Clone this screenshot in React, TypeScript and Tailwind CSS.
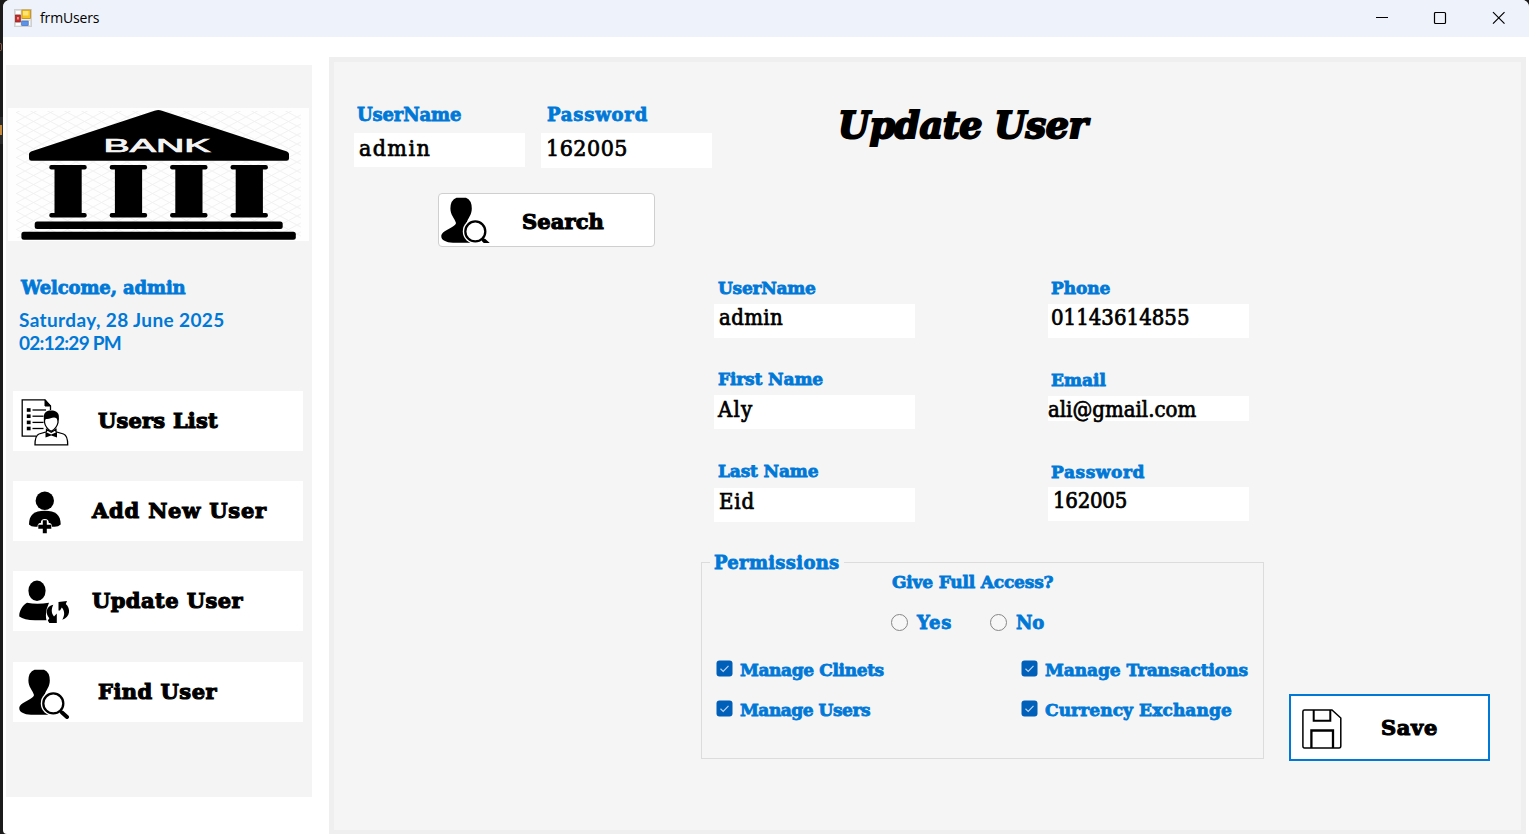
import React from "react";

const slab = "font-['DejaVu_Serif',serif] font-bold whitespace-nowrap";
const blue = "text-[#0078d7] [-webkit-text-stroke:0.8px_#0078d7]";
const black = "text-black [-webkit-text-stroke:1.1px_#000]";

function Label({ text, className = "" }: { text: string; className?: string }) {
  return <div className={`${slab} ${blue} leading-5 ${className}`}>{text}</div>;
}

function Field({ value, className = "" }: { value: string; className?: string }) {
  return (
    <div
      className={`bg-white font-['DejaVu_Serif_Condensed','DejaVu_Serif',serif] whitespace-nowrap text-black [-webkit-text-stroke:0.7px_#000] ${className}`}
    >
      {value}
    </div>
  );
}

function AppIcon() {
  return (
    <svg width="18" height="18" viewBox="0 0 18 18" className="relative -top-px">
      <rect x="0.5" y="0.5" width="17" height="17" fill="#dedede" stroke="#cfcfcf" />
      <path d="M2 2h4.500v3H2zM2 14h4.500v2.500H2zM8 11h8v-0.500H8zM14.500 12h1.500v4h-1.500z" fill="#fff" />
      <rect x="1.300" y="6" width="5.200" height="7" fill="#c22b2b" stroke="#8f1d1d" strokeWidth="0.6" />
      <rect x="3.200" y="8" width="1.500" height="2.500" fill="#f3b0a8" />
      <rect x="7.900" y="1" width="8.500" height="8.500" fill="#f6c320" stroke="#c08a10" strokeWidth="0.8" />
      <rect x="9" y="2" width="5.500" height="4.500" fill="#fde37a" />
      <rect x="7.700" y="12" width="6.500" height="4.500" fill="#5b93ea" stroke="#3465b8" strokeWidth="0.6" />
    </svg>
  );
}

function BankLogo() {
  return (
    <svg width="301" height="133" viewBox="0 0 301 133" className="block">
      <defs>
        <pattern id="lattice" width="17" height="9" patternUnits="userSpaceOnUse">
          <path d="M0 0L17 9M17 0L0 9" stroke="#efefef" strokeWidth="0.9" />
        </pattern>
      </defs>
      <rect width="301" height="133" fill="#fefefe" />
      <rect x="8" y="3" width="285" height="127" fill="url(#lattice)" />
      <path d="M150.300 2Q152 2 154 2.800L279 43.500Q281 44.500 281 46V50.500Q281 52.700 278.500 52.700H23.500Q21 52.700 21 50.500V46Q21 44.500 23 43.500L146.500 2.800Q149 2 150.300 2Z" fill="#000" />
      {[41.3, 101.7, 162.1, 222.5].map((x) => (
        <g key={x} transform={`translate(${x} 57)`}>
          <rect width="37.400" height="4.500" rx="2" />
          <rect x="5.200" y="2" width="27.200" height="49" />
          <rect y="48" width="37.400" height="4.500" rx="2" />
        </g>
      ))}
      <rect x="26.700" y="113.500" width="248" height="7.500" rx="2.500" />
      <rect x="13.400" y="123.800" width="274.400" height="8" rx="2.500" />
      <text
        x="95.500"
        y="44.300"
        textLength="107"
        lengthAdjust="spacingAndGlyphs"
        fill="#f4f4f4"
        stroke="#f4f4f4"
        strokeWidth="0.7"
        className="font-['Liberation_Sans',sans-serif] text-[18px]"
      >
        BANK
      </text>
    </svg>
  );
}

function ListIcon() {
  return (
    <svg width="50" height="50" viewBox="0 0 50 50" fill="none" stroke="#000" strokeWidth="1.300">
      <path d="M16 38.200H2.200V1.800H25L30.500 8V12" />
      <path d="M25 1.800V8H30.500Z" fill="#000" strokeWidth="1" />
      {[12, 18.2, 24.4, 30.5].map((y) => (
        <g key={y}>
          <rect x="6.800" y={y - 1.8} width="3.800" height="3.600" fill="#000" stroke="none" />
          <path d={`M12.500 ${y}H${y < 15 ? 26 : 23.5}`} />
        </g>
      ))}
      <path d="M24.500 20V24.500Q25.500 30 31.200 33.300Q37 30 38 24.500V20" fill="#fff" />
      <path d="M24.300 22.500C22.500 15 26 12.600 31 12.600C36.500 12.600 40.300 15 38.500 22.500H37.500C37.200 20.500 36 19.500 34 19.500C31 19.500 29.500 21.500 26 21C25.300 21.300 25.300 22 25 22.500Z" fill="#000" stroke="none" />
      <path d="M26.500 31.500V33.800L19 36Q15 37.500 15 46.800H47.700Q47.700 37.500 43.500 36L36 33.800V31.500L31.200 34.300Z" fill="#fff" />
      <path d="M25.500 34L31.200 36.500L37 34V39.500L31.200 37.500L25.500 39.500Z" fill="#000" stroke="none" />
    </svg>
  );
}

function AddIcon() {
  return (
    <svg width="50" height="50" viewBox="0 0 50 50" className="relative top-[2px]">
      <circle cx="24.800" cy="10.800" r="9.200" />
      <path d="M9 34.500C9 25 14 20.800 24.800 20.800S40.700 25 40.700 34.500Q38.500 36.700 34.500 36.800H15Q11 36.700 9 34.500Z" />
      <path d="M24.800 33V40M21.500 36.700H28" stroke="#fff" strokeWidth="8" strokeLinecap="round" />
      <path d="M24.800 30.200V43.200M18.300 36.700H31.300" stroke="#000" strokeWidth="4" />
    </svg>
  );
}

function UpdateIcon() {
  return (
    <svg width="52" height="50" viewBox="0 0 52 50" className="relative top-[2px] -left-px">
      <ellipse cx="18" cy="10.800" rx="8.600" ry="10.200" />
      <path d="M8 22.800Q18 24.500 30 22.800Q25.500 32 27.500 40.300H16Q5 40 0.300 36.500C-0.200 32 3.500 25 8 22.800Z" />
      <path d="M34.300 24.800C27 26 26 33.500 30.300 38.300L28.800 40.500L30.300 43H37.800V33.500L35 36.500C32 33 32.300 29 34.300 24.800Z" />
      <path d="M43.300 39.800C51.500 37 51.800 28.500 46.800 24L48 21L39.500 22V30.500H41L42.800 27.500C45.800 31 46 35 43.300 39.800Z" />
    </svg>
  );
}

function FindIcon({ clipped = false }: { clipped?: boolean }) {
  return (
    <svg width="52" height={clipped ? 46 : 50} viewBox={clipped ? "0 0 52 46" : "0 0 52 50"} className={clipped ? "relative top-px -left-px" : "relative"}>
      <path d="M15.500 0.700H25Q30.800 3 30.800 11.500C30.800 18 27 21 25.500 26Q25.500 28.500 31 30.500L29 45.800H12C5 45.500 0.300 43 0.300 39.500C0.300 33 14 31 15 26C13.500 21 9.400 18 9.400 11.500Q9.400 3 15.500 0.700Z" />
      <circle cx="34.300" cy="34.400" r="12.500" fill="#fff" />
      <circle cx="34.300" cy="34.400" r="10" fill="#fff" stroke="#000" strokeWidth="2.300" />
      <path d="M41.500 42L43 43.500" stroke="#000" strokeWidth="2.500" />
      <path d="M43 43.500L48 48" stroke="#000" strokeWidth="4" strokeLinecap="round" />
    </svg>
  );
}

function SaveIcon() {
  return (
    <svg width="40" height="40" viewBox="0 0 40 40" fill="none" stroke="#000" className="relative top-px">
      <path d="M2.500 0.900H30L38.800 9V37Q38.800 39 37 39H2.500Q0.900 39 0.900 37V2.500Q0.900 0.900 2.500 0.900Z" strokeWidth="1.500" />
      <path d="M11.700 1V11.800H28.300V1" strokeWidth="2" />
      <path d="M9.400 39V21.500H31V39" strokeWidth="2.300" />
    </svg>
  );
}

function NavButton({ icon, text, pad, className = "" }: { icon: React.ReactNode; text: string; pad: string; className?: string }) {
  return (
    <button className={`flex h-[60px] w-[290px] items-start bg-white pt-[7px] text-left ${pad}`}>
      <span className="w-[52px] shrink-0">{icon}</span>
      <span className={`${slab} ${black} pt-[1px] text-[21px] leading-[44px] ${className}`}>{text}</span>
    </button>
  );
}

function Check({ text, className = "" }: { text: string; className?: string }) {
  return (
    <label className="flex h-5 items-start">
      <svg width="17" height="17" viewBox="0 0 17 17" className="mr-[7px] shrink-0">
        <rect x="0.500" y="0.500" width="16" height="16" rx="3" fill="#005fb8" />
        <path d="M4.500 8.800L7.200 11.400L12.500 5.800" fill="none" stroke="#b9d6f0" strokeWidth="1.200" />
      </svg>
      <span className={`${slab} ${blue} relative -top-[0.5px] text-[17px] leading-5 ${className}`}>{text}</span>
    </label>
  );
}

function Radio({ text, className = "" }: { text: string; className?: string }) {
  return (
    <label className="flex h-5 items-center">
      <span className="mr-[9px] size-[17px] rounded-full border-[1.500px] border-[#868686] bg-[#f7f7f7]" />
      <span className={`${slab} ${blue} pt-[2px] text-[18px] leading-5 ${className}`}>{text}</span>
    </label>
  );
}

export default function App() {
  return (
    <div className="relative h-[834px] w-[1529px] overflow-hidden bg-[#1b1b1c] pl-[3px]">
      <div className="absolute top-[43px] left-0 h-[8px] w-[2px] rounded-r border border-l-0 border-[#8a5a4a]" />
      <div className="absolute top-[117px] left-0 h-[27px] w-[3px] bg-[#2c2c2c]" />
      <div className="absolute top-[125px] left-0 h-[10px] w-[2px] bg-[#c58a3c]" />
      <div className="flex h-full w-full flex-col overflow-hidden rounded-t-[7px] rounded-bl-[4px] bg-white">
        <header className="flex h-[37px] shrink-0 items-center bg-[#eef2fa] pl-[11px]">
          <AppIcon />
          <span className="mb-[2px] ml-[8px] font-['Open_Sans',sans-serif] text-[14px] tracking-[-0.15px] text-black">frmUsers</span>
          <svg width="131" height="14" viewBox="0 0 131 14" className="mr-[23px] mb-px ml-auto" fill="none" stroke="#000" strokeWidth="1.200">
            <path d="M1 6.500H13" />
            <rect x="59.500" y="1.500" width="11" height="11" rx="1" />
            <path d="M118 1.200L129.500 12.700M129.500 1.200L118 12.700" />
          </svg>
        </header>

        <div className="flex min-h-0 flex-1">
          <aside className="mt-[28px] ml-[3px] flex h-[732px] w-[306px] shrink-0 flex-col bg-[#f4f4f4] pt-[43px]">
            <div className="ml-[2px]">
              <BankLogo />
            </div>
            <Label text="Welcome, admin" className="mt-[37px] ml-[15px] text-[18px] tracking-[-0.12px]" />
            <div className="mt-[11px] ml-[13px] h-[45px] font-[Lato,sans-serif] text-[19px] leading-[22px] font-bold whitespace-nowrap text-[#0078d7]">
              <div className="tracking-[0.38px]">Saturday, 28 June 2025</div>
              <div className="pt-px tracking-[-0.75px]">02:12:29 PM</div>
            </div>
            <nav className="mt-[37px] ml-[7px] flex flex-col gap-[30px]">
              <NavButton icon={<ListIcon />} text="Users List" pad="pl-[7px]" className="ml-[26px] tracking-[0.2px]" />
              <NavButton icon={<AddIcon />} text="Add New User" pad="pl-[7px]" className="ml-[20px] tracking-[0.79px]" />
              <NavButton icon={<UpdateIcon />} text="Update User" pad="pl-[7px]" className="ml-[20px] tracking-[0.43px]" />
              <div className="pt-px">
                <NavButton icon={<FindIcon />} text="Find User" pad="pl-[6px]" className="ml-[27px] tracking-[0.48px]" />
              </div>
            </nav>
          </aside>

          <main className="mt-[20px] ml-[17px] flex w-[1197px] shrink-0 flex-col border-[5px] border-b-[4px] border-[#efefef] bg-[#f5f5f5]">
            <section className="flex h-[211px] pt-[42px] pl-[20px]">
              <div className="w-[358px]">
                <div className="flex">
                  <div className="w-[187px]">
                    <Label text="UserName" className="ml-[3px] pt-[1px] text-[18px] tracking-[-0.15px]" />
                    <Field value="admin" className="mt-[8px] h-[34px] w-[171px] pl-[5px] text-[23px] leading-[31px] tracking-[1.400px]" />
                  </div>
                  <div className="w-[171px]">
                    <Label text="Password" className="ml-[6px] pt-[1px] text-[18px] tracking-[0.81px]" />
                    <Field value="162005" className="mt-[8px] h-[35px] w-[171px] pl-[5px] text-[23px] leading-[31px] tracking-[0.500px]" />
                  </div>
                </div>
                <button className="mt-[25px] ml-[84px] flex h-[54px] w-[217px] items-start rounded-[4px] border border-b-[1.500px] border-[#cfcfcf] bg-white pt-[2px] pl-[3px]">
                  <FindIcon clipped />
                  <span className={`${slab} ${black} ml-[28px] text-[21px] leading-[52px] tracking-[0.12px]`}>Search</span>
                </button>
              </div>
              <h1 className={`${slab} ml-[126px] pt-[2px] text-[36.5px] leading-[40px] tracking-[-0.45px] text-black italic [-webkit-text-stroke:2px_#000]`}>
                Update User
              </h1>
            </section>

            <section className="flex pt-[5px] pl-[380px]">
              <div className="w-[334px]">
                <Label text="UserName" className="ml-[4px] text-[17px] tracking-[-0.25px]" />
                <Field value="admin" className="mt-[6px] h-[34px] w-[201px] pl-[5px] text-[22px] leading-[28px] tracking-[0.34px]" />
                <Label text="First Name" className="mt-[31px] ml-[4px] text-[17px] tracking-[-0.12px]" />
                <Field value="Aly" className="mt-[6px] h-[34px] w-[201px] pl-[4px] text-[22px] leading-[29px] tracking-[1.200px]" />
                <Label text="Last Name" className="mt-[32px] ml-[4px] text-[17px] tracking-[-0.15px]" />
                <Field value="Eid" className="mt-[7px] h-[34px] w-[201px] pl-[5px] text-[22px] leading-[28px] tracking-[0.85px]" />
              </div>
              <div className="w-[201px]">
                <Label text="Phone" className="ml-[3px] text-[17px] tracking-[-0.1px]" />
                <Field value="01143614855" className="mt-[6px] h-[34px] pl-[3px] text-[22px] leading-[28px]" />
                <Label text="Email" className="mt-[32px] ml-[3px] text-[17px]" />
                <Field value="ali@gmail.com" className="mt-[6px] h-[25px] text-[22px] leading-[27px]" />
                <Label text="Password" className="mt-[41px] ml-[3px] text-[17px] tracking-[0.59px]" />
                <Field value="162005" className="mt-[5px] h-[34px] pl-[5px] text-[22px] leading-[27px] tracking-[-0.26px]" />
              </div>
            </section>

            <section className="mt-[30px] flex pl-[367px]">
              <fieldset className="h-[207px] w-[563px] border border-[#dcdcdc] pl-[14px]">
                <legend className={`${slab} ${blue} relative top-px -ml-[6px] px-[4px] text-[18px] leading-5 tracking-[0.3px]`}>Permissions</legend>
                <div className="h-[88px] pl-[176px]">
                  <Label text="Give Full Access?" className="text-[17px] tracking-[-0.18px]" />
                  <div className="mt-[20px] -ml-px flex gap-[38px]">
                    <Radio text="Yes" className="tracking-[0.71px]" />
                    <Radio text="No" className="tracking-[-0.1px]" />
                  </div>
                </div>
                <div className="grid grid-cols-[305px_auto] gap-y-[20px]">
                  <Check text="Manage Clinets" className="tracking-[-0.36px]" />
                  <Check text="Manage Transactions" className="tracking-[-0.06px]" />
                  <Check text="Manage Users" className="tracking-[-0.46px]" />
                  <Check text="Currency Exchange" className="tracking-[0.11px]" />
                </div>
              </fieldset>
              <button className="mt-[142px] ml-[25px] flex h-[67px] w-[201px] items-center border-[2px] border-[#0078d7] bg-white pl-[11px]">
                <SaveIcon />
                <span className={`${slab} ${black} ml-[39px] text-[21px] leading-[40px] tracking-[0.67px]`}>Save</span>
              </button>
            </section>
          </main>
        </div>
      </div>
    </div>
  );
}
